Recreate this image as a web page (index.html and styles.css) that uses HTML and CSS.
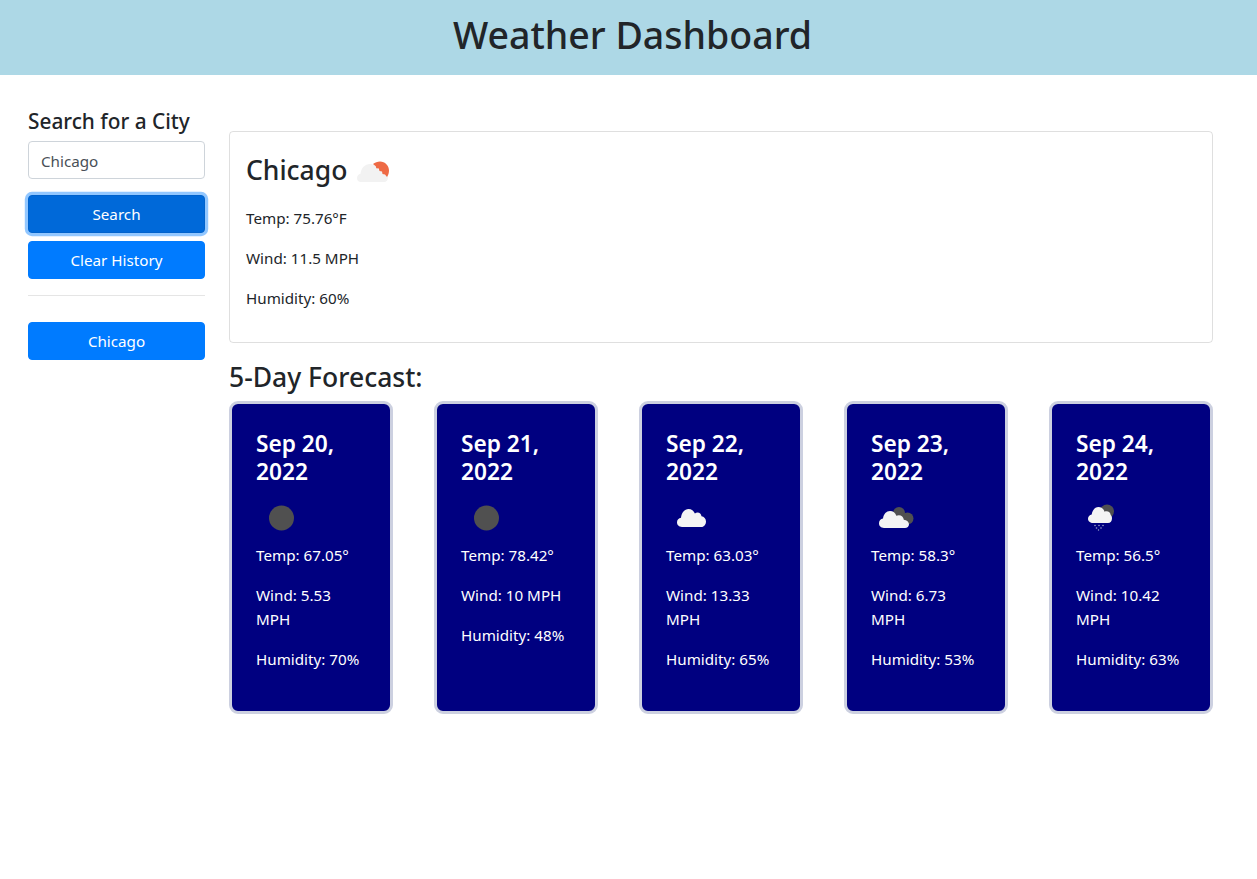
FILE: index.html
```html
<!DOCTYPE html>
<html>
<head>
    <meta charset="UTF-8">
    <meta name="viewport" content="width=device-width, initial-scale=1.0">
    <title>Weather Dashboard</title>
    <link rel="stylesheet" href="styles.css">
</head>
<body>
    <header class="page-header">
        <h1>Weather Dashboard</h1>
    </header>

    <div class="layout">
        <aside class="sidebar">
            <h3>Search for a City</h3>
            <input class="city-input" type="text" value="Chicago">
            <button class="btn btn-focus">Search</button>
            <button class="btn">Clear History</button>
            <hr>
            <button class="btn">Chicago</button>
        </aside>

        <main class="content">
            <section class="today">
                <div class="today-title">
                    <h2>Chicago</h2>
                    <svg class="today-icon" width="38" height="30" viewBox="0 0 38 30">
                        <path fill="#f2f2f2" d="M8 27c-2.400 0-4-1.600-4-4 0-2.200 1.500-3.800 3.500-4.200.5-5.500 4.400-9.800 9.500-9.800 3.700 0 7 2.200 8.400 5.500.8-.3 1.600-.5 2.400-.5 3 0 5.200 2 5.500 4.500 1.100.6 1.700 2 1.700 4 0 2.600-1.500 4.500-4 4.500z"/>
                        <path fill="#ee6a45" d="M20 9c2-1.500 4.500-2.500 7-2.500 5 0 9 4 9 9 0 2.500-.7 4.700-2 6.500l-2-2.500-2.500-.5-.5-2.500-2.500-.5-.7-2.500-2.500-.3-.5-2z"/>
                    </svg>
                </div>
                <p>Temp: 75.76°F</p>
                <p>Wind: 11.5 MPH</p>
                <p>Humidity: 60%</p>
            </section>

            <h3 class="forecast-title">5-Day Forecast:</h3>
            <section class="forecast">
                <div class="day-card">
                    <h4>Sep 20, 2022</h4>
                    <svg class="day-icon" width="50" height="32" viewBox="0 0 50 32"><circle cx="25.500" cy="16" r="12.500" fill="#505050"/></svg>
                    <p>Temp: 67.05°</p>
                    <p>Wind: 5.53 MPH</p>
                    <p>Humidity: 70%</p>
                </div>
                <div class="day-card">
                    <h4>Sep 21, 2022</h4>
                    <svg class="day-icon" width="50" height="32" viewBox="0 0 50 32"><circle cx="25.500" cy="16" r="12.500" fill="#505050"/></svg>
                    <p>Temp: 78.42°</p>
                    <p>Wind: 10 MPH</p>
                    <p>Humidity: 48%</p>
                </div>
                <div class="day-card">
                    <h4>Sep 22, 2022</h4>
                    <svg class="day-icon" width="50" height="32" viewBox="0 0 50 32">
                        <path fill="#f4f4f4" d="M16 25c-3 0-5-2-5-4.700 0-2.500 1.800-4.300 4-4.600.5-5 3.600-8.700 7.500-8.700 3 0 5.300 1.800 6.400 4.500.8-.7 1.700-1 2.600-1 2.200 0 3.700 1.600 4 3.700 2.500.4 4.500 2.500 4.500 5.200 0 3-2 5.600-5 5.600z"/>
                    </svg>
                    <p>Temp: 63.03°</p>
                    <p>Wind: 13.33 MPH</p>
                    <p>Humidity: 65%</p>
                </div>
                <div class="day-card">
                    <h4>Sep 23, 2022</h4>
                    <svg class="day-icon" width="50" height="32" viewBox="0 0 50 32">
                        <circle cx="28" cy="11" r="6" fill="#505050"/>
                        <circle cx="36.500" cy="16.500" r="6" fill="#505050"/>
                        <path fill="#f4f4f4" d="M13 26c-3 0-5-2-5-4.700 0-2.500 1.700-4.300 4-4.700.5-4.500 3.500-7.600 7-7.600 3 0 5.500 2 6.300 4.800.8-.4 1.600-.6 2.500-.6 2.700 0 4.800 2 5 4.500 3 .3 5.200 2.300 5.200 4.600 0 2.300-1.700 3.700-4 3.700z"/>
                    </svg>
                    <p>Temp: 58.3°</p>
                    <p>Wind: 6.73 MPH</p>
                    <p>Humidity: 53%</p>
                </div>
                <div class="day-card">
                    <h4>Sep 24, 2022</h4>
                    <svg class="day-icon" width="50" height="32" viewBox="0 0 50 32">
                        <circle cx="31" cy="9.500" r="7" fill="#505050"/>
                        <path fill="#f4f4f4" d="M17 21c-2.700 0-5-1.800-5-4.300 0-2.200 1.600-3.900 3.700-4.200.5-4.300 3.300-7.500 6.800-7.500 2.900 0 5.200 2 6 4.700.7-.3 1.300-.4 2-.4 2.300 0 4 1.700 4.200 3.800.9.800 1.300 1.900 1.300 3.400 0 2.600-1.500 4.500-4 4.500z"/>
                        <g fill="#9aa0c8">
                            <circle cx="19" cy="23.500" r=".8"/><circle cx="23" cy="23.500" r=".8"/><circle cx="27" cy="23.500" r=".8"/>
                            <circle cx="20.500" cy="26" r=".8"/><circle cx="25" cy="26" r=".8"/><circle cx="22.500" cy="28" r=".7"/>
                        </g>
                    </svg>
                    <p>Temp: 56.5°</p>
                    <p>Wind: 10.42 MPH</p>
                    <p>Humidity: 63%</p>
                </div>
            </section>
        </main>
    </div>
</body>
</html>
```
FILE: styles.css
```css
* {
    box-sizing: border-box;
}

body {
    margin: 0;
    font-family: "Noto Sans", "Open Sans", sans-serif;
    font-size: 15.2px;
    line-height: 24px;
    color: #212529;
    background-color: #fff;
}

h1, h2, h3, h4, p {
    margin: 0;
    font-weight: 500;
}

p {
    font-weight: 400;
    margin-bottom: 16px;
}

.page-header {
    height: 75px;
    padding: 11px 0 0 8px;
    background-color: lightblue;
    text-align: center;
}

.page-header h1 {
    font-size: 37.500px;
    line-height: 48px;
}

.layout {
    display: flex;
    padding: 33px 44px 0 28px;
    gap: 24px;
}

.sidebar {
    flex: 0 0 177px;
    min-width: 0;
    display: flex;
    flex-direction: column;
}

.sidebar h3 {
    font-size: 20.800px;
    line-height: 26px;
    margin-bottom: 7px;
}

.city-input {
    width: 100%;
    height: 38px;
    padding: 7px 12px 5px;
    margin-bottom: 16px;
    border: 1px solid #ced4da;
    border-radius: 4px;
    font: inherit;
    color: #495057;
}

.btn {
    height: 38px;
    margin-bottom: 8px;
    border: 1px solid #007bff;
    border-radius: 4px;
    background-color: #007bff;
    color: #fff;
    font: inherit;
}

.btn-focus {
    background-color: #0069d9;
    border-color: #0062cc;
    box-shadow: 0 0 0 3.200px rgba(38, 143, 255, .5);
}

.sidebar hr {
    width: 100%;
    margin: 8px 0 26px;
    border: 0;
    border-top: 1px solid rgba(0, 0, 0, .1);
}

.content {
    flex: 1;
    min-width: 0;
    padding-top: 23px;
}

.today {
    height: 212px;
    padding: 16px;
    border: 1px solid rgba(0, 0, 0, .125);
    border-radius: 4px;
}

.today-title {
    display: flex;
    align-items: center;
    margin-bottom: 14px;
}

.today-title h2 {
    font-size: 26.500px;
    line-height: 44px;
}

.today-icon {
    margin-left: 6px;
}

.forecast-title {
    margin-top: 18px;
    font-size: 26.500px;
    line-height: 32px;
    margin-bottom: 8px;
}

.forecast {
    display: flex;
    justify-content: space-between;
}

.day-card {
    width: 164px;
    height: 313px;
    padding: 26px 24px;
    border: 3px solid #ccd0e0;
    border-radius: 9px;
    background-color: navy;
    color: #fff;
}

.day-card h4 {
    font-size: 22.700px;
    font-weight: 600;
    line-height: 28px;
    margin-bottom: 16px;
}

.day-icon {
    display: block;
    margin-bottom: 9px;
}
```
